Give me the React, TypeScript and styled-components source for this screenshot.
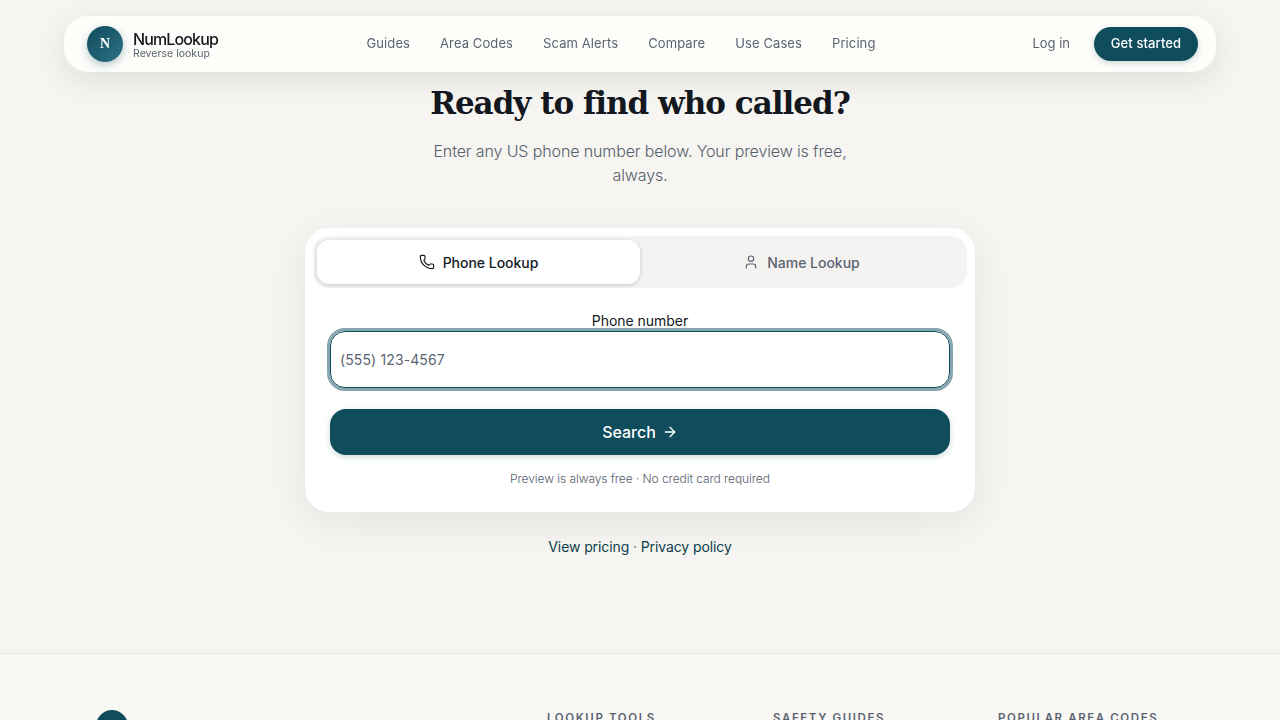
import React from 'react';
import styled, { createGlobalStyle } from 'styled-components';
import { ArrowRight, Phone, User } from 'lucide-react';

const COLORS = {
    page: '#f6f5f1',
    footer: '#f9f8f5',
    teal: '#0f4c5c',
    ink: '#14181f',
    muted: '#5b6472',
};

const GlobalStyle = createGlobalStyle`
    html, body {
        margin: 0;
        height: 720px;
        overflow: hidden;
        background: ${COLORS.page};
        font-family: 'Inter', 'Noto Sans', sans-serif;
        color: ${COLORS.ink};
    }
    * {
        box-sizing: border-box;
    }
`;

const NavBar = styled.header`
    position: fixed;
    top: 16px;
    left: 64px;
    width: 1152px;
    height: 56px;
    display: flex;
    align-items: center;
    justify-content: space-between;
    padding: 0 18px 0 23px;
    background: #fdfdfa;
    border-radius: 24px;
    box-shadow: 0 8px 32px rgba(20, 24, 31, 0.1);
    z-index: 10;
`;

const Brand = styled.div`
    display: flex;
    align-items: center;
    gap: 10px;
    width: 131px;
`;

const BrandMark = styled.div`
    width: 36px;
    height: 36px;
    flex-shrink: 0;
    border-radius: 50%;
    display: flex;
    align-items: center;
    justify-content: center;
    background: linear-gradient(135deg, #0f4c5c, #2f7085);
    box-shadow: 0 3px 8px rgba(15, 76, 92, 0.3);
    color: #fff;
    font-family: 'Liberation Serif', serif;
    font-weight: 700;
    font-size: 14px;
`;

const BrandText = styled.div`
    display: flex;
    flex-direction: column;
    padding-top: 3px;
`;

const BrandName = styled.span`
    font-size: 16px;
    font-weight: 500;
    line-height: 17px;
    letter-spacing: -0.87px;
`;

const BrandTag = styled.span`
    font-size: 10.5px;
    line-height: 12px;
    color: ${COLORS.muted};
    letter-spacing: 0.03px;
`;

const NavLinks = styled.nav`
    display: flex;
    gap: 30px;
    margin-left: -8px;
    padding-bottom: 2px;
`;

const NavLink = styled.a`
    font-size: 13px;
    color: ${COLORS.muted};
    letter-spacing: 0.1px;
    white-space: nowrap;
`;

const NavActions = styled.div`
    display: flex;
    align-items: center;
    justify-content: flex-end;
    gap: 24px;
    width: 166px;
    & > ${NavLink} {
        padding-bottom: 2px;
        letter-spacing: 0;
    }
`;

const GetStarted = styled.button`
    height: 34px;
    width: 104px;
    flex-shrink: 0;
    border: 0;
    padding: 0 0 2px;
    border-radius: 17px;
    background: ${COLORS.teal};
    color: #fff;
    font: 500 13px 'Inter', sans-serif;
    letter-spacing: 0.1px;
    box-shadow: 0 2px 6px rgba(15, 76, 92, 0.22);
`;

const Main = styled.main`
    height: 653px;
    padding-top: 80px;
    display: flex;
    flex-direction: column;
    align-items: center;
`;

const Title = styled.h1`
    margin: 0;
    font-family: 'DejaVu Serif', serif;
    font-size: 31px;
    line-height: 46px;
    font-weight: 700;
    letter-spacing: -1px;
`;

const Subtitle = styled.p`
    margin: 13px 0 0;
    width: 440px;
    font-size: 16px;
    line-height: 24px;
    font-weight: 300;
    text-align: center;
    color: #555e6c;
    letter-spacing: -0.12px;
`;

const Card = styled.section`
    margin-top: 41px;
    width: 670px;
    height: 284px;
    padding: 8px;
    background: #fff;
    border-radius: 24px;
    box-shadow: 0 10px 40px rgba(20, 24, 31, 0.08);
`;

const Tabs = styled.div`
    display: grid;
    grid-template-columns: 1fr 1fr;
    height: 52px;
    background: #f4f3f1;
    border-radius: 16px;
    padding: 4px;
`;

const Tab = styled.div<{ $active?: boolean }>`
    display: flex;
    align-items: center;
    justify-content: center;
    gap: 8px;
    font-size: 14px;
    font-weight: 500;
    letter-spacing: -0.02px;
    border-radius: 12px;
    color: ${(p) => (p.$active ? COLORS.ink : COLORS.muted)};
    background: ${(p) => (p.$active ? '#fff' : 'transparent')};
    box-shadow: ${(p) => (p.$active ? '0 1px 4px rgba(20, 24, 31, 0.2)' : 'none')};
`;

const Form = styled.form`
    padding: 24px 17px 0;
    display: flex;
    flex-direction: column;
    align-items: center;
`;

const FieldLabel = styled.label`
    font-size: 14px;
    line-height: 17px;
    letter-spacing: -0.04px;
`;

const PhoneInput = styled.input`
    width: 100%;
    height: 57px;
    margin-top: 2px;
    padding: 0 9px;
    border: 1.5px solid ${COLORS.teal};
    border-radius: 15px;
    outline: 3px solid rgba(15, 76, 92, 0.5);
    outline-offset: 0;
    background: #fff;
    font: 400 14px 'Inter', sans-serif;
    letter-spacing: 0.12px;
    &::placeholder {
        color: ${COLORS.muted};
        opacity: 1;
    }
`;

const SearchButton = styled.button`
    width: 620px;
    height: 46px;
    margin-top: 21px;
    border: 0;
    border-radius: 16px;
    display: flex;
    align-items: center;
    justify-content: center;
    gap: 6px;
    background: ${COLORS.teal};
    color: #fff;
    font: 500 16px 'Inter', sans-serif;
    box-shadow: 0 2px 6px rgba(15, 76, 92, 0.2);
`;

const Note = styled.p`
    margin: 16px 0 0;
    font-size: 12px;
    line-height: 16px;
    font-weight: 300;
    color: #555e6c;
    letter-spacing: -0.07px;
`;

const LegalLinks = styled.p`
    margin: 25px 0 0;
    font-size: 14px;
    line-height: 20px;
    color: ${COLORS.muted};
    letter-spacing: -0.1px;
    & > a {
        color: #0e3f4d;
    }
`;

const Footer = styled.footer`
    height: 67px;
    overflow: hidden;
    background: ${COLORS.footer};
    border-top: 1px solid #e9e8e4;
    padding: 56px 96px 0;
    display: flex;
`;

const FooterLogo = styled.div`
    width: 32px;
    height: 32px;
    flex-shrink: 0;
    border-radius: 50%;
    background: ${COLORS.teal};
`;

const FooterColumns = styled.div`
    margin-left: 419px;
    padding-top: 1px;
    display: flex;
`;

const FooterHeading = styled.h4<{ $width: number }>`
    margin: 0;
    width: ${(p) => p.$width}px;
    font-size: 11.5px;
    line-height: 14px;
    font-weight: 600;
    letter-spacing: 1.6px;
    text-transform: uppercase;
    white-space: nowrap;
    color: ${COLORS.muted};
`;

const App = (): JSX.Element => {
    return (
        <>
            <GlobalStyle />
            <NavBar>
                <Brand>
                    <BrandMark>N</BrandMark>
                    <BrandText>
                        <BrandName>NumLookup</BrandName>
                        <BrandTag>Reverse lookup</BrandTag>
                    </BrandText>
                </Brand>
                <NavLinks>
                    <NavLink>Guides</NavLink>
                    <NavLink>Area Codes</NavLink>
                    <NavLink>Scam Alerts</NavLink>
                    <NavLink>Compare</NavLink>
                    <NavLink>Use Cases</NavLink>
                    <NavLink>Pricing</NavLink>
                </NavLinks>
                <NavActions>
                    <NavLink>Log in</NavLink>
                    <GetStarted>Get started</GetStarted>
                </NavActions>
            </NavBar>
            <Main>
                <Title>Ready to find who called?</Title>
                <Subtitle>Enter any US phone number below. Your preview is free, always.</Subtitle>
                <Card>
                    <Tabs>
                        <Tab $active>
                            <Phone size={16} strokeWidth={1.75} />
                            Phone Lookup
                        </Tab>
                        <Tab>
                            <User size={16} strokeWidth={1.75} />
                            Name Lookup
                        </Tab>
                    </Tabs>
                    <Form>
                        <FieldLabel>Phone number</FieldLabel>
                        <PhoneInput placeholder="(555) 123-4567" />
                        <SearchButton type="button">
                            Search
                            <ArrowRight size={16} strokeWidth={2} />
                        </SearchButton>
                        <Note>Preview is always free · No credit card required</Note>
                    </Form>
                </Card>
                <LegalLinks>
                    <a>View pricing</a> · <a>Privacy policy</a>
                </LegalLinks>
            </Main>
            <Footer>
                <FooterLogo />
                <FooterColumns>
                    <FooterHeading $width={226}>Lookup Tools</FooterHeading>
                    <FooterHeading $width={225}>Safety Guides</FooterHeading>
                    <FooterHeading $width={182}>Popular Area Codes</FooterHeading>
                </FooterColumns>
            </Footer>
        </>
    );
};

export default App;
